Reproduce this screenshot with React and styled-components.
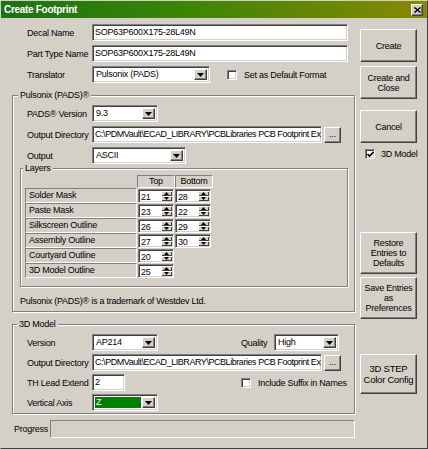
import React from 'react';
import styled, { createGlobalStyle, css } from 'styled-components';

const FONT = `"Liberation Sans", Arial, sans-serif`;

const Global = createGlobalStyle`
  html, body { margin: 0; padding: 0; background: #d4d0c8; }
  body { font-family: ${FONT}; font-size: 9px; letter-spacing: -0.25px; color: #000; }
  * { box-sizing: border-box; }
`;

const sunken = css`
  border: 1px solid;
  border-color: #808080 #fff #fff #808080;
  box-shadow: inset 1px 1px 0 #404040, inset -1px -1px 0 #d4d0c8;
`;

const raised = css`
  border: 1px solid;
  border-color: #fff #404040 #404040 #fff;
  box-shadow: inset -1px -1px 0 #808080, inset 1px 1px 0 #d4d0c8;
  background: #d4d0c8;
`;

const etched = css`
  border: 1px solid #808080;
  box-shadow: inset 1px 1px 0 #fff, 1px 1px 0 #fff;
`;

const Window = styled.div`
  width: 428px;
  height: 449px;
  background: #d4d0c8;
  border: 1px solid;
  border-color: #d4d0c8 #404040 #404040 #d4d0c8;
  display: flex;
  flex-direction: column;
  overflow: hidden;
`;

const TitleBar = styled.div`
  height: 17px;
  flex: none;
  background: linear-gradient(90deg, #1b7212 0%, #3d8605 45%, #8a8800 100%);
  display: flex;
  align-items: center;
  justify-content: space-between;
  padding: 0 3px 0 3px;
`;

const Title = styled.span`
  color: #fff;
  font-weight: bold;
  font-size: 10px;
  letter-spacing: -0.3px;
`;

const CloseBox = styled.div`
  ${raised};
  width: 12px;
  height: 12px;
  display: flex;
  align-items: center;
  justify-content: center;
  margin-right: 1px;
`;

const Body = styled.div`
  flex: 1;
  display: flex;
  padding: 6px 10px 0 11px;
`;

const LeftCol = styled.div`
  width: 343px;
  display: flex;
  flex-direction: column;
`;

const RightCol = styled.div`
  width: 57px;
  margin-left: 5px;
  display: flex;
  flex-direction: column;
`;

const Form = styled.div`
  display: flex;
  flex-direction: column;
  gap: ${p => p.$gap}px;
  padding-left: ${p => p.$indent}px;
`;

const Row = styled.div`
  display: flex;
  align-items: center;
  height: 17px;
`;

const Label = styled.span`
  width: ${p => p.$w || 65}px;
  flex: none;
  white-space: nowrap;
  margin-left: ${p => p.$ml || 0}px;
`;

const TextBox = styled.div`
  ${sunken};
  background: #fff;
  width: ${p => p.$w}px;
  height: 17px;
  padding: 0 2px 0 2px;
  line-height: 15px;
  white-space: nowrap;
  overflow: hidden;
  flex: none;
  letter-spacing: ${p => (p.$tight ? '-0.45px' : 'inherit')};
`;

const SelectBox = styled.div`
  ${sunken};
  background: #fff;
  width: ${p => p.$w}px;
  height: 17px;
  padding: 2px;
  display: flex;
  flex: none;
`;

const SelectText = styled.span`
  flex: 1;
  line-height: 11px;
  padding-left: 1px;
  margin-right: 1px;
  white-space: nowrap;
  overflow: hidden;
  background: ${p => (p.$hl ? '#008000' : 'transparent')};
  color: ${p => (p.$hl ? '#fff' : '#000')};
`;

const DropButton = styled.div`
  ${raised};
  width: 13px;
  height: 11px;
  display: flex;
  align-items: center;
  justify-content: center;
`;

const DotsButton = styled.div`
  ${raised};
  width: 17px;
  height: 16px;
  margin-left: 2px;
  display: flex;
  align-items: flex-end;
  justify-content: center;
  padding-bottom: 3px;
  font-size: 9px;
  line-height: 9px;
  letter-spacing: 0;
`;

const CheckRow = styled.label`
  display: flex;
  align-items: center;
  gap: ${p => p.$gap || 7}px;
  margin-left: ${p => p.$ml || 0}px;
  margin-top: ${p => p.$mt || 0}px;
  white-space: nowrap;
`;

const CheckBox = styled.span`
  ${sunken};
  background: #fff;
  width: 10px;
  height: 10px;
  display: flex;
  align-items: center;
  justify-content: center;
  flex: none;
`;

const Group = styled.div`
  ${etched};
  position: relative;
  margin-top: ${p => p.$mt}px;
  padding: ${p => p.$pad};
`;

const Caption = styled.span`
  position: absolute;
  top: -7px;
  left: ${p => p.$left}px;
  padding: 0 2px;
  background: #d4d0c8;
  line-height: 12px;
`;

const LayerGrid = styled.div`
  display: grid;
  grid-template-columns: 112px 38px 38px;
  grid-template-rows: 13px;
  grid-auto-rows: 15px;
`;

const HeadCell = styled.div`
  border: 1px solid;
  border-color: #808080 #fff #fff #808080;
  display: flex;
  align-items: center;
  justify-content: center;
  line-height: 11px;
`;

const BlankCell = styled.div``;

const LayerName = styled.div`
  border: 1px solid;
  border-color: #808080 #fff #fff #808080;
  padding-left: 3px;
  line-height: 13px;
  white-space: nowrap;
`;

const SpinCell = styled.div`
  display: flex;
  align-items: center;
  justify-content: ${p => (p.$first ? 'flex-end' : 'flex-start')};
  padding-right: ${p => (p.$first ? 1 : 0)}px;
`;

const Spin = styled.div`
  ${sunken};
  background: #fff;
  width: 36px;
  height: 14px;
  padding: 1px;
  display: flex;
`;

const SpinValue = styled.span`
  flex: 1;
  line-height: 12px;
  padding-left: 1px;
`;

const SpinButtons = styled.div`
  width: 11px;
  display: flex;
  flex-direction: column;
`;

const SpinBtn = styled.div`
  flex: 1;
  display: flex;
  align-items: center;
  justify-content: center;
  background: #d4d0c8;
  box-shadow: inset 1px 1px 0 #fff, inset -1px -1px 0 #404040;
`;

const Note = styled.p`
  margin: 8px 0 0 0;
  line-height: 12px;
`;

const ProgressRow = styled.div`
  display: flex;
  align-items: center;
  margin-top: 6px;
  height: 18px;
`;

const ProgressLabel = styled.span`
  width: 38px;
  padding-left: 2px;
  flex: none;
`;

const ProgressBox = styled.div`
  flex: 1;
  height: 18px;
  border: 1px solid;
  border-color: #808080 #fff #fff #808080;
`;

const Button = styled.div`
  ${raised};
  height: ${p => p.$h}px;
  margin-top: ${p => p.$mt}px;
  display: flex;
  align-items: center;
  justify-content: center;
  text-align: center;
  line-height: ${p => p.$lh || 10}px;
  font-size: ${p => p.$fs || 9}px;
  white-space: pre-line;
  flex: none;
`;

const Arrow = ({ down = true, w = 7, h = 4 }) => (
  <svg width={w} height={h} viewBox={`0 0 ${w} ${h}`}>
    <polygon
      points={down ? `0,0 ${w},0 ${w / 2},${h}` : `0,${h} ${w},${h} ${w / 2},0`}
      fill="#000"
    />
  </svg>
);

const Select = ({ w, value, hl }) => (
  <SelectBox $w={w}>
    <SelectText $hl={hl}>{value}</SelectText>
    <DropButton>
      <Arrow />
    </DropButton>
  </SelectBox>
);

const Check = ({ checked }) => (
  <CheckBox>
    {checked && (
      <svg width="7" height="7" viewBox="0 0 7 7">
        <path d="M0.5 3 L2.5 5 L6.5 1" stroke="#000" strokeWidth="1.6" fill="none" />
      </svg>
    )}
  </CheckBox>
);

const SpinBox = ({ value }) => (
  <Spin>
    <SpinValue>{value}</SpinValue>
    <SpinButtons>
      <SpinBtn>
        <Arrow down={false} w={5} h={3} />
      </SpinBtn>
      <SpinBtn>
        <Arrow w={5} h={3} />
      </SpinBtn>
    </SpinButtons>
  </Spin>
);

const layers = [
  ['Solder Mask', '21', '28'],
  ['Paste Mask', '23', '22'],
  ['Silkscreen Outline', '26', '29'],
  ['Assembly Outline', '27', '30'],
  ['Courtyard Outline', '20', null],
  ['3D Model Outline', '25', null],
];

const DIR = 'C:\\PDMVault\\ECAD_LIBRARY\\PCBLibraries PCB Footprint Exp';

export default function App() {
  return (
    <>
      <Global />
      <Window>
        <TitleBar>
          <Title>Create Footprint</Title>
          <CloseBox>
            <svg width="7" height="6" viewBox="0 0 7 6">
              <path d="M0.5 0.5 L6.5 5.5 M6.5 0.5 L0.5 5.5" stroke="#000" strokeWidth="1.5" />
            </svg>
          </CloseBox>
        </TitleBar>
        <Body>
          <LeftCol>
            <Form $gap={4} $indent={15}>
              <Row>
                <Label>Decal Name</Label>
                <TextBox $w={256}>SOP63P600X175-28L49N</TextBox>
              </Row>
              <Row>
                <Label>Part Type Name</Label>
                <TextBox $w={256}>SOP63P600X175-28L49N</TextBox>
              </Row>
              <Row>
                <Label>Translator</Label>
                <Select w={118} value="Pulsonix (PADS)" />
                <CheckRow $ml={17}>
                  <Check />
                  Set as Default Format
                </CheckRow>
              </Row>
            </Form>

            <Group $mt={12} $pad="9px 6px 4px 7px">
              <Caption $left={5}>Pulsonix (PADS)®</Caption>
              <Form $gap={4} $indent={7}>
                <Row>
                  <Label>PADS® Version</Label>
                  <Select w={66} value="9.3" />
                </Row>
                <Row>
                  <Label>Output Directory</Label>
                  <TextBox $w={230} $tight>{DIR}</TextBox>
                  <DotsButton>...</DotsButton>
                </Row>
                <Row>
                  <Label>Output</Label>
                  <Select w={94} value="ASCII" />
                </Row>
              </Form>
              <Group $mt={4} $pad="6px 4px 8px 4px">
                <Caption $left={2}>Layers</Caption>
                <LayerGrid>
                  <BlankCell />
                  <HeadCell>Top</HeadCell>
                  <HeadCell>Bottom</HeadCell>
                  {layers.map(([name, top, bottom]) => (
                    <React.Fragment key={name}>
                      <LayerName>{name}</LayerName>
                      <SpinCell $first>
                        <SpinBox value={top} />
                      </SpinCell>
                      <SpinCell>{bottom && <SpinBox value={bottom} />}</SpinCell>
                    </React.Fragment>
                  ))}
                </LayerGrid>
              </Group>
              <Note>Pulsonix (PADS)® is a trademark of Westdev Ltd.</Note>
            </Group>

            <Group $mt={12} $pad="9px 6px 2px 7px">
              <Caption $left={4}>3D Model</Caption>
              <Form $gap={3} $indent={7}>
                <Row>
                  <Label>Version</Label>
                  <Select w={66} value="AP214" />
                  <Label $w={33} $ml={83}>Quality</Label>
                  <Select w={65} value="High" />
                </Row>
                <Row>
                  <Label>Output Directory</Label>
                  <TextBox $w={230} $tight>{DIR}</TextBox>
                  <DotsButton>...</DotsButton>
                </Row>
                <Row>
                  <Label>TH Lead Extend</Label>
                  <TextBox $w={33}>2</TextBox>
                  <CheckRow $ml={116}>
                    <Check />
                    Include Suffix in Names
                  </CheckRow>
                </Row>
                <Row>
                  <Label>Vertical Axis</Label>
                  <Select w={66} value="Z" hl />
                </Row>
              </Form>
            </Group>

            <ProgressRow>
              <ProgressLabel>Progress</ProgressLabel>
              <ProgressBox />
            </ProgressRow>
          </LeftCol>

          <RightCol>
            <Button $h={33} $mt={5}>Create</Button>
            <Button $h={33} $mt={4}>{'Create and\nClose'}</Button>
            <Button $h={33} $mt={11}>Cancel</Button>
            <CheckRow $ml={5} $mt={6} $gap={6}>
              <Check checked />
              3D Model
            </CheckRow>
            <Button $h={42} $mt={73}>{'Restore\nEntries to\nDefaults'}</Button>
            <Button $h={42} $mt={3}>{'Save Entries\nas\nPreferences'}</Button>
            <Button $h={40} $mt={35} $lh={11} $fs={9.5}>{'3D STEP\nColor Config'}</Button>
          </RightCol>
        </Body>
      </Window>
    </>
  );
}
